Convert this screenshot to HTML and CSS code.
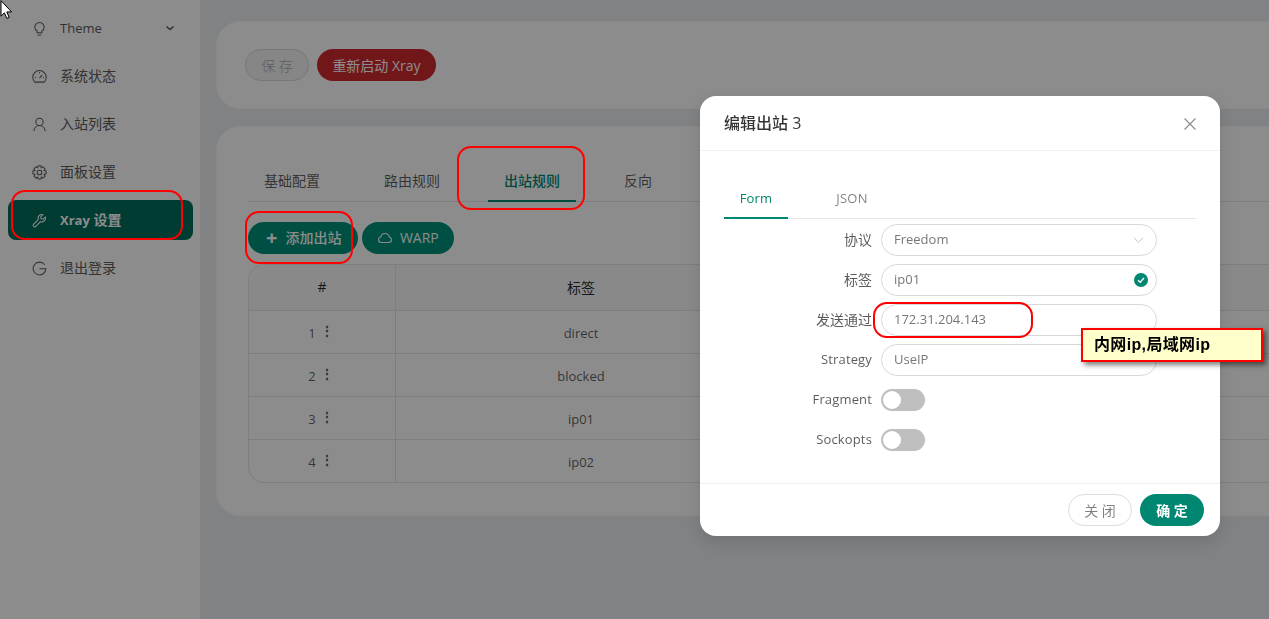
FILE: index.html
```html
<!DOCTYPE html>
<html lang="zh">
<head>
  <meta charset="UTF-8">
  <title>Xray 设置</title>
  <link rel="stylesheet" href="styles.css">
</head>
<body>
<div class="layout">
  <aside class="sider">
    <ul class="menu">
      <li class="menu-item">
        <svg class="menu-icon" viewBox="0 0 16 16"><path d="M5.500 10.800C4.100 9.800 3 8.400 3 6.600a5 5 0 0 1 10 0c0 1.800-1.100 3.200-2.500 4.200v1.700h-5zM6 15h4"/></svg>
        <span class="en">Theme</span>
        <svg class="menu-arrow" viewBox="0 0 10 10"><path d="M1.500 3.500 5 6.500l3.500-3"/></svg>
      </li>
      <li class="menu-item">
        <svg class="menu-icon" viewBox="0 0 16 16"><path d="M3 14a7.200 7.200 0 1 1 10 0zM8 9.800l2.700-3.300M3.300 9h1.200M11.500 9h1.200M8 3.500v1.200"/></svg>
        <span>系统状态</span>
      </li>
      <li class="menu-item">
        <svg class="menu-icon" viewBox="0 0 16 16"><circle cx="8" cy="5.200" r="3.900"/><path d="M2 15c.3-3.300 2.800-5.900 6-5.900s5.700 2.600 6 5.900"/></svg>
        <span>入站列表</span>
      </li>
      <li class="menu-item">
        <svg class="menu-icon" viewBox="0 0 16 16"><circle cx="8" cy="8" r="2.500"/><path d="M6.500.8h3l.4 2.100 1.800-1 2.200 2.100-1.100 1.800 2.200.6v3l-2.200.6 1.100 1.800-2.200 2.100-1.800-1-.4 2.100h-3l-.4-2.100-1.800 1-2.200-2.100 1.100-1.800-2.200-.6v-3l2.200-.6-1.100-1.800 2.200-2.100 1.800 1z"/></svg>
        <span>面板设置</span>
      </li>
      <li class="menu-item selected">
        <svg class="menu-icon" viewBox="0 0 16 16"><path d="M14.200 4.300 11.800 6.600 9.700 6.200 9.300 4.200 11.700 1.800a4 4 0 0 0-5 5.200L1.800 11.900a1.600 1.600 0 0 0 2.300 2.300L9 9.300a4 4 0 0 0 5.200-5z"/></svg>
        <span><span class="en">Xray</span> 设置</span>
      </li>
      <li class="menu-item">
        <svg class="menu-icon" viewBox="0 0 16 16"><path d="M13.500 4A6.800 6.800 0 1 0 14.800 8.200H8"/></svg>
        <span>退出登录</span>
      </li>
    </ul>
  </aside>

  <main class="content">
    <section class="card card-top">
      <button class="btn btn-disabled">保 存</button>
      <button class="btn btn-danger">重新启动 Xray</button>
    </section>

    <section class="card card-main">
      <div class="tabs page-tabs">
        <div class="tab">基础配置</div>
        <div class="tab">路由规则</div>
        <div class="tab active">出站规则</div>
        <div class="tab">反向</div>
      </div>
      <div class="actions">
        <button class="btn btn-primary btn-add"><span class="plus">+</span>添加出站</button>
        <button class="btn btn-primary btn-warp">
          <svg class="cloud" viewBox="0 0 16 12"><path d="M4 10.500a2.800 2.800 0 0 1-.3-5.500 4.400 4.400 0 0 1 8.600 0 2.800 2.800 0 0 1-.3 5.500z"/></svg>
          WARP
        </button>
      </div>
      <table class="table">
        <thead>
          <tr><th class="col-num">#</th><th class="col-tag">标签</th><th></th></tr>
        </thead>
        <tbody>
          <tr><td class="col-num">1<span class="dots">⋮</span></td><td>direct</td><td></td></tr>
          <tr><td class="col-num">2<span class="dots">⋮</span></td><td>blocked</td><td></td></tr>
          <tr><td class="col-num">3<span class="dots">⋮</span></td><td>ip01</td><td></td></tr>
          <tr><td class="col-num">4<span class="dots">⋮</span></td><td>ip02</td><td></td></tr>
        </tbody>
      </table>
    </section>
  </main>
</div>

<div class="mask"></div>

<div class="modal">
  <div class="modal-header">
    <span class="modal-title">编辑出站 3</span>
    <svg class="modal-close" viewBox="0 0 12 12"><path d="M.5.500l11 11M11.500.500l-11 11"/></svg>
  </div>
  <div class="modal-body">
    <div class="tabs modal-tabs">
      <div class="tab active">Form</div>
      <div class="tab">JSON</div>
    </div>
    <div class="form">
      <div class="form-row">
        <label>协议</label>
        <div class="field">Freedom
          <svg class="select-arrow" viewBox="0 0 12 8"><path d="M1 1.500 6 6.500l5-5"/></svg>
        </div>
      </div>
      <div class="form-row">
        <label>标签</label>
        <div class="field">ip01
          <svg class="check" viewBox="0 0 14 14"><circle cx="7" cy="7" r="7"/><path d="M4 7.200 6.200 9.300 10 5"/></svg>
        </div>
      </div>
      <div class="form-row">
        <label>发送通过</label>
        <div class="field">172.31.204.143</div>
      </div>
      <div class="form-row">
        <label class="en">Strategy</label>
        <div class="field">UseIP</div>
      </div>
      <div class="form-row">
        <label class="en">Fragment</label>
        <div class="switch"><span class="knob"></span></div>
      </div>
      <div class="form-row">
        <label class="en">Sockopts</label>
        <div class="switch"><span class="knob"></span></div>
      </div>
    </div>
  </div>
  <div class="modal-footer">
    <button class="btn btn-default">关 闭</button>
    <button class="btn btn-ok">确 定</button>
  </div>
</div>

<!-- annotations drawn on top of the screenshot -->
<div class="mark mark-menu"></div>
<div class="mark mark-tab"></div>
<div class="mark mark-add"></div>
<div class="mark mark-input"></div>
<div class="note">内网ip,局域网ip</div>
<svg class="cursor" viewBox="0 0 12 19"><path d="M1 .700v15.500l3.400-3.400 2.400 5.600 2.400-1-2.400-5.500h4.800z"/></svg>
</body>
</html>
```

FILE: styles.css
```css
* { box-sizing: border-box; }
html, body { margin: 0; height: 100%; overflow: hidden; }
body {
  font-family: "Open Sans", "Noto Sans CJK SC", sans-serif;
  font-size: 14px;
  color: rgba(0, 0, 0, .65);
  background: #eaedf1;
}
.en { font-size: 13px; }

.layout { display: flex; height: 619px; }

/* sidebar */
.sider {
  width: 201px;
  flex: none;
  background: #fff;
  border-right: 1px solid #eee;
  padding-top: 8px;
}
.menu { list-style: none; margin: 0; padding: 0 8px; }
.menu-item {
  display: flex;
  align-items: center;
  height: 40px;
  margin-bottom: 8px;
  padding-left: 24px;
  width: 185px;
  border-radius: 8px;
  color: #5b5b5b;
}
.menu-item > span { margin-bottom: 2px; }
.menu-item > .en { margin-bottom: 0; }
.menu-icon {
  width: 15px;
  height: 15px;
  margin-right: 13px;
  flex: none;
  fill: none;
  stroke: currentColor;
  stroke-width: 1.100;
}
.menu-arrow {
  width: 10px;
  height: 10px;
  margin-left: auto;
  margin-right: 18px;
  fill: none;
  stroke: currentColor;
  stroke-width: 1.600;
}
.selected {
  background: #006d5b;
  color: #fff;
  font-weight: 700;
}

/* main column */
.content {
  flex: 1;
  padding: 21px 0 0 15px;
  min-width: 0;
}
.card {
  width: 1100px;
  background: #fff;
  border: 1px solid #fafafa;
  border-radius: 24px;
}
.card-top {
  height: 88px;
  margin-bottom: 17px;
  padding: 27px 28px;
  display: flex;
  gap: 8px;
}
.card-main { height: 390px; padding: 31px; }

.btn {
  height: 32px;
  border-radius: 16px;
  border: 1px solid transparent;
  font: inherit;
  padding: 0 15px;
}
.btn-disabled {
  width: 64px;
  color: rgba(0, 0, 0, .25);
  background: #f5f5f5;
  border-color: #d9d9d9;
}
.btn-danger {
  width: 119px;
  color: #fff;
  background: #cf2a2e;
  padding: 0;
}
.btn-primary { color: #fff; background: #00917a; }
.btn-default {
  width: 64px;
  background: #fff;
  border-color: #dedede;
  color: rgba(0, 0, 0, .5);
  padding: 0;
}
.btn-ok {
  width: 64px;
  background: #008771;
  color: #fff;
  font-weight: 700;
  padding: 0;
}

/* tabs */
.tabs { display: flex; border-bottom: 1px solid #e6e6e6; }
.tab { height: 43px; line-height: 46px; position: relative; }
.tab.active { color: #008771; font-weight: 500; }
.tab.active::after {
  content: "";
  position: absolute;
  left: 0;
  right: 0;
  bottom: -1px;
  height: 2px;
  background: #008771;
}
.page-tabs { gap: 32px; margin-bottom: 20px; }
.page-tabs .tab { padding: 0 16px; }

.modal-tabs { margin-bottom: 5px; font-size: 13px; color: rgba(0, 0, 0, .5); }
.modal-tabs .tab { width: 64px; text-align: center; line-height: 46px; letter-spacing: .2px; }
.modal-tabs .tab + .tab { margin-left: 32px; }

/* outbound actions */
.actions { display: flex; gap: 4px; margin-bottom: 10px; }
.btn-add { width: 110px; padding: 0 0 2px 17px; font-weight: 500; text-align: left; }
.plus { font-size: 20px; font-weight: 700; margin-right: 8px; line-height: 20px; vertical-align: -2px; }
.btn-warp { width: 92px; padding: 0 0 2px; font-weight: 500; }
.cloud {
  width: 16px;
  height: 12px;
  margin-right: 3px;
  vertical-align: -1px;
  fill: none;
  stroke: currentColor;
  stroke-width: 1.100;
}

/* table */
.table {
  width: 100%;
  border-collapse: separate;
  border-spacing: 0;
  border: 1px solid #e6e6e6;
  border-radius: 16px;
  table-layout: fixed;
  font-size: 13px;
}
.table th {
  height: 46px;
  padding-bottom: 3px;
  font-size: 14px;
  font-weight: 400;
  background: #fafafa;
  color: rgba(0, 0, 0, .85);
  border-bottom: 1px solid #e6e6e6;
}
.table th:first-child { border-top-left-radius: 16px; }
.table td {
  height: 43px;
  padding: 2px 0 0;
  text-align: center;
  border-bottom: 1px solid #e6e6e6;
}
.table tbody tr:last-child td { height: 42px; border-bottom: 0; }
.table .col-num { width: 147px; border-right: 1px solid #e6e6e6; }
.table td.col-num { padding: 0 2px 2px 0; }
.table .col-tag { width: 370px; }
.dots { margin-left: 4px; font-size: 14px; font-weight: 700; vertical-align: 2px; }

/* modal */
.mask {
  position: fixed;
  inset: 0;
  background: rgba(0, 0, 0, .45);
}
.modal {
  position: absolute;
  left: 700px;
  top: 96px;
  width: 520px;
  height: 440px;
  background: #fff;
  border-radius: 16px;
  box-shadow: 0 6px 16px rgba(0, 0, 0, .12);
  display: flex;
  flex-direction: column;
}
.modal-header {
  display: flex;
  align-items: center;
  justify-content: space-between;
  height: 55px;
  padding: 0 24px 0;
  border-bottom: 1px solid #f0f0f0;
  color: rgba(0, 0, 0, .8);
}
.modal-title { font-size: 16px; font-weight: 500; margin-bottom: 2px; }
.modal-close {
  width: 12px;
  height: 12px;
  margin-top: 1px;
  stroke: #8c8c8c;
  stroke-width: 1.200;
  fill: none;
}
.modal-body { flex: 1; padding: 24px 24px 0; }
.form-row {
  display: flex;
  align-items: center;
  height: 32px;
  margin-bottom: 8px;
}
.form-row label {
  width: 157px;
  text-align: right;
  padding: 0 9px 3px 0;
  flex: none;
}
.form-row label.en { font-size: 13px; padding-bottom: 2px; letter-spacing: .15px; }
.field {
  position: relative;
  width: 276px;
  height: 32px;
  line-height: 28px;
  padding: 0 12px;
  border: 1px solid #d9d9d9;
  border-radius: 16px;
  font-size: 13px;
  color: #777;
}
.select-arrow {
  position: absolute;
  right: 12px;
  top: 11px;
  width: 11px;
  height: 8px;
  fill: none;
  stroke: #bfbfbf;
}
.check {
  position: absolute;
  right: 8px;
  top: 8px;
  width: 14px;
  height: 14px;
  fill: #008771;
}
.check path { fill: none; stroke: #fff; stroke-width: 1.300; }
.switch {
  width: 44px;
  height: 22px;
  border-radius: 11px;
  background: #bfbfbf;
  padding: 2px;
}
.knob {
  display: block;
  width: 18px;
  height: 18px;
  border-radius: 50%;
  background: #fff;
}
.modal-footer {
  display: flex;
  justify-content: flex-end;
  gap: 8px;
  height: 53px;
  padding: 10px 16px 0;
  border-top: 1px solid #f0f0f0;
}

/* annotations */
.mark {
  position: absolute;
  border: 2px solid #ff0000;
  border-radius: 14px;
}
.mark-menu { left: 11px; top: 190px; width: 172px; height: 50px; }
.mark-tab { left: 457px; top: 146px; width: 128px; height: 64px; }
.mark-add { left: 245px; top: 211px; width: 108px; height: 53px; }
.mark-input { left: 873px; top: 302px; width: 160px; height: 36px; }
.note {
  position: absolute;
  left: 1081px;
  top: 328px;
  width: 182px;
  height: 34px;
  padding-left: 11px;
  line-height: 30px;
  background: #ffffcc;
  border: 2px solid #ff0000;
  box-shadow: 3px 3px 5px rgba(0, 0, 0, .5);
  color: #000;
  font-family: "Liberation Sans", "Noto Sans CJK SC", sans-serif;
  font-size: 16px;
  font-weight: 700;
  letter-spacing: .35px;
}
.cursor {
  position: absolute;
  left: 0;
  top: 0;
  width: 12px;
  height: 19px;
  fill: #fff;
  stroke: #000;
  stroke-width: 1;
}
```
